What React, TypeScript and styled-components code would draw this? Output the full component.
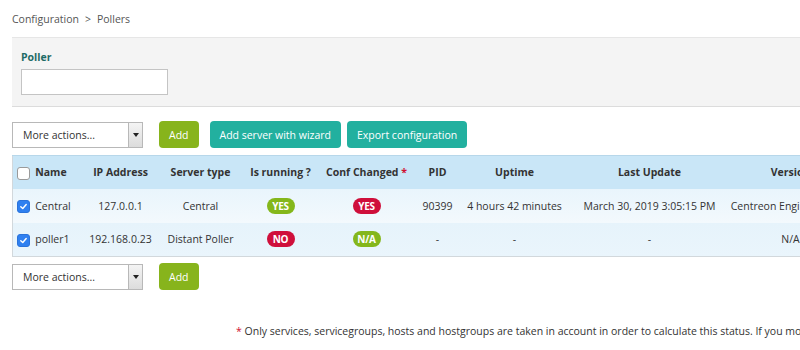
import styled, { createGlobalStyle } from "styled-components";

const GlobalStyle = createGlobalStyle`
  html, body {
    margin: 0;
    padding: 0;
    overflow: hidden;
    background: #fff;
  }
  body {
    font-family: "Open Sans", "Liberation Sans", sans-serif;
    font-size: 10.5px;
    color: #333;
  }
`;

const Page = styled.div`
  width: 1100px;
  padding: 12px 0 0 12px;
`;

const Breadcrumb = styled.div`
  font-size: 10.5px;
  color: #555;
  height: 14px;
  line-height: 14px;
  margin-bottom: 11px;
  display: flex;
  gap: 6px;
`;

const FilterPanel = styled.div`
  background: #f4f4f4;
  border-top: 1px solid #e6e6e6;
  border-bottom: 1px solid #dcdcdc;
  padding: 12px 9px 11px;
  display: flex;
  flex-direction: column;
  gap: 5px;
`;

const FilterLabel = styled.label`
  font-weight: 700;
  font-size: 10.5px;
  color: #1f6b66;
  line-height: 14px;
`;

const TextInput = styled.div`
  width: 145px;
  height: 24px;
  background: #fff;
  border: 1px solid #c4c4c4;
`;

const ActionRow = styled.div<{ $top: number }>`
  display: flex;
  align-items: center;
  gap: 6px;
  margin-top: ${(p) => p.$top}px;
  height: 27px;
`;

const Select = styled.div`
  width: 129px;
  height: 24px;
  border: 1px solid #b8b8b8;
  background: #fff;
  display: flex;
  align-items: center;
  margin-right: 10px;
`;

const SelectText = styled.span`
  flex: 1;
  padding-left: 10px;
  color: #333;
`;

const SelectArrow = styled.span`
  width: 13px;
  height: 100%;
  border-left: 1px solid #b8b8b8;
  background: linear-gradient(#f4f4f4, #dcdcdc);
  display: flex;
  align-items: center;
  justify-content: center;
  &::after {
    content: "";
    border-left: 3px solid transparent;
    border-right: 3px solid transparent;
    border-top: 4px solid #222;
  }
`;

const Button = styled.button<{ $variant: "green" | "teal" }>`
  height: 27px;
  border: none;
  border-radius: 4px;
  padding: 0 10px;
  color: #fff;
  font-family: inherit;
  font-size: 10.5px;
  background: ${(p) => (p.$variant === "green" ? "#87b41c" : "#22b09f")};
  margin-right: ${(p) => (p.$variant === "green" ? "5px" : "0")};
`;

const Table = styled.table`
  margin-top: 7px;
  border-collapse: collapse;
  table-layout: fixed;
  width: 900px;
  border: 1px solid #d2d8dc;
  border-top: none;
`;

const HeadRow = styled.tr`
  background: #c9e6f7;
  height: 33px;
  border-top: 1px solid #b7d7ea;
`;

const BodyRow = styled.tr<{ $alt?: boolean }>`
  height: 34px;
  background: ${(p) =>
    p.$alt ? "linear-gradient(#e6f3fb, #eaf5fc)" : "linear-gradient(#e9f5fc, #f3f9fd)"};
`;

const Th = styled.th<{ $align?: string }>`
  font-weight: 700;
  font-size: 10.5px;
  color: #333;
  text-align: ${(p) => p.$align || "center"};
  padding: 0;
  white-space: nowrap;
`;

const Td = styled.td<{ $align?: string }>`
  text-align: ${(p) => p.$align || "center"};
  padding: 0;
  white-space: nowrap;
  overflow: hidden;
  color: #333;
`;

const Star = styled.span`
  color: #d0102f;
`;

const Check = styled.span<{ $on?: boolean }>`
  display: inline-flex;
  align-items: center;
  justify-content: center;
  width: 11px;
  height: 11px;
  border-radius: 3px;
  vertical-align: middle;
  background: ${(p) => (p.$on ? "#2f80f0" : "#fff")};
  border: 1px solid ${(p) => (p.$on ? "#2a73db" : "#9a9a9a")};
  margin-left: 4px;
`;

const Badge = styled.span<{ $tone: "ok" | "bad" }>`
  display: inline-block;
  width: 28px;
  height: 16px;
  line-height: 16px;
  border-radius: 8px;
  font-size: 10px;
  font-weight: 700;
  letter-spacing: -0.2px;
  color: #fff;
  background: ${(p) => (p.$tone === "ok" ? "#84b71b" : "#cf0f3b")};
`;

const Footnote = styled.div`
  margin-top: 34px;
  padding-left: 224px;
  white-space: nowrap;
  font-size: 10.5px;
  color: #333;
`;

function CheckBox({ on }: { on?: boolean }) {
  return (
    <Check $on={on}>
      {on && (
        <svg width="9" height="9" viewBox="0 0 10 10">
          <path d="M2 5.2 L4.2 7.3 L8 2.8" fill="none" stroke="#fff" strokeWidth="1.6" strokeLinecap="round" strokeLinejoin="round" />
        </svg>
      )}
    </Check>
  );
}

function Actions({ top, full }: { top: number; full?: boolean }) {
  return (
    <ActionRow $top={top}>
      <Select>
        <SelectText>More actions...</SelectText>
        <SelectArrow />
      </Select>
      <Button $variant="green">Add</Button>
      {full && (
        <>
          <Button $variant="teal">Add server with wizard</Button>
          <Button $variant="teal">Export configuration</Button>
        </>
      )}
    </ActionRow>
  );
}

const pollers = [
  {
    name: "Central",
    ip: "127.0.0.1",
    type: "Central",
    running: true,
    changed: "YES",
    pid: "90399",
    uptime: "4 hours 42 minutes",
    last: "March 30, 2019 3:05:15 PM",
    version: "Centreon Engine 19.04.0",
  },
  {
    name: "poller1",
    ip: "192.168.0.23",
    type: "Distant Poller",
    running: false,
    changed: "N/A",
    pid: "-",
    uptime: "-",
    last: "-",
    version: "N/A",
  },
];

export default function App() {
  return (
    <Page>
      <GlobalStyle />
      <Breadcrumb>
        <span>Configuration</span>
        <span>&gt;</span>
        <span>Pollers</span>
      </Breadcrumb>
      <FilterPanel>
        <FilterLabel>Poller</FilterLabel>
        <TextInput />
      </FilterPanel>
      <Actions top={14} full />
      <Table>
        <colgroup>
          <col style={{ width: 20 }} />
          <col style={{ width: 53 }} />
          <col style={{ width: 70 }} />
          <col style={{ width: 90 }} />
          <col style={{ width: 70 }} />
          <col style={{ width: 102 }} />
          <col style={{ width: 40 }} />
          <col style={{ width: 114 }} />
          <col style={{ width: 156 }} />
          <col style={{ width: 126 }} />
          <col />
        </colgroup>
        <thead>
          <HeadRow>
            <Th $align="left">
              <CheckBox />
            </Th>
            <Th $align="left">&nbsp;Name</Th>
            <Th>IP Address</Th>
            <Th>Server type</Th>
            <Th>Is running ?</Th>
            <Th>
              Conf Changed <Star>*</Star>
            </Th>
            <Th>PID</Th>
            <Th>Uptime</Th>
            <Th>Last Update</Th>
            <Th>Version</Th>
            <Th>Default</Th>
          </HeadRow>
        </thead>
        <tbody>
          {pollers.map((p, i) => (
            <BodyRow key={p.name} $alt={i % 2 === 1}>
              <Td $align="left">
                <CheckBox on />
              </Td>
              <Td $align="left">&nbsp;{p.name}</Td>
              <Td>{p.ip}</Td>
              <Td>{p.type}</Td>
              <Td>
                <Badge $tone={p.running ? "ok" : "bad"}>{p.running ? "YES" : "NO"}</Badge>
              </Td>
              <Td>
                <Badge $tone={p.changed === "YES" ? "bad" : "ok"}>{p.changed}</Badge>
              </Td>
              <Td>{p.pid}</Td>
              <Td>{p.uptime}</Td>
              <Td>{p.last}</Td>
              <Td>{p.version}</Td>
              <Td>Yes</Td>
            </BodyRow>
          ))}
        </tbody>
      </Table>
      <Actions top={6} />
      <Footnote>
        <Star>*</Star> Only services, servicegroups, hosts and hostgroups are taken in account in order to
        calculate this status. If you modify a template, it won't tell you the configuration had changed.
      </Footnote>
    </Page>
  );
}
